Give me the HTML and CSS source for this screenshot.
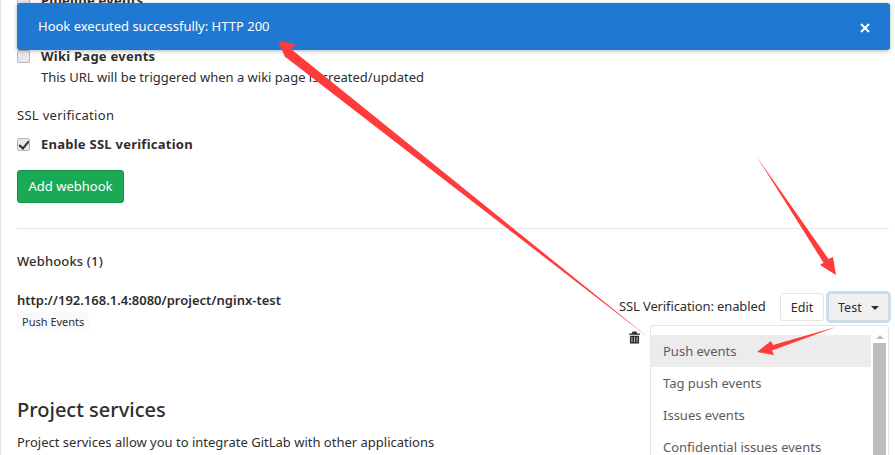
FILE: index.html
```html
<!DOCTYPE html>
<html lang="en">
<head>
<meta charset="utf-8">
<title>Webhooks</title>
<link rel="stylesheet" href="styles.css">
</head>
<body>
<main class="page">
  <div class="event event-covered">
    <label class="check-title"><input type="checkbox" class="check"><span>Pipeline events</span></label>
  </div>
  <div class="event">
    <label class="check-title"><input type="checkbox" class="check"><span>Wiki Page events</span></label>
    <p class="help">This URL will be triggered when a wiki page is created/updated</p>
  </div>
  <div class="ssl-label">SSL verification</div>
  <label class="check-title ssl-check"><input type="checkbox" class="check" checked><span>Enable SSL verification</span></label>
  <button class="add-btn" type="button">Add webhook</button>
  <hr class="rule">
  <h5 class="hooks-title">Webhooks (1)</h5>
  <div class="hook">
    <div class="hook-info">
      <div class="hook-url">http://192.168.1.4:8080/project/nginx-test</div>
      <span class="tag">Push Events</span>
    </div>
    <div class="hook-controls">
      <span class="ssl-state">SSL Verification: enabled</span>
      <button class="btn" type="button">Edit</button>
      <div class="test-group">
        <button class="btn btn-test" type="button">Test <span class="caret"></span></button>
        <div class="menu">
          <ul class="menu-list">
            <li class="menu-item active">Push events</li>
            <li class="menu-item">Tag push events</li>
            <li class="menu-item">Issues events</li>
            <li class="menu-item">Confidential issues events</li>
          </ul>
          <div class="scroll"><span class="scroll-up"></span><span class="scroll-thumb"></span></div>
        </div>
      </div>
      <svg class="trash" viewBox="0 0 12 13" width="11" height="13" aria-hidden="true"><path d="M4 0h4l1 2h3v1.500H0V2h3z M1 4.500h10V13H1z" fill="#2e2e2e"/><path d="M3.200 6v5.500M6 6v5.500M8.800 6v5.500" stroke="#cdbbe0" stroke-width="1"/></svg>
    </div>
  </div>
  <h3 class="services-title">Project services</h3>
  <p class="services-text">Project services allow you to integrate GitLab with other applications</p>
</main>

<div class="flash">
  <span>Hook executed successfully: HTTP 200</span>
  <svg class="close" viewBox="0 0 10 10" width="10" height="10" aria-hidden="true"><path d="M1 1l8 8M9 1l-8 8" stroke="#fff" stroke-width="2"/></svg>
</div>

<svg class="arrows" viewBox="0 0 895 455" width="895" height="455" aria-hidden="true">
  <polygon points="278,41 296,44 291,49 649,338 288,59 285,57" fill="#ff3b3b"/>
  <polygon points="757,157 828.500,259 833,257 836,275 820,265 823.500,262.700" fill="#ff3b3b"/>
  <polygon points="836,327 773,345 771,341 757,352 774,355 772,350.500" fill="#ff3b3b"/>
</svg>
</body>
</html>
```
FILE: styles.css
```css
* { box-sizing: border-box; }
html, body { margin: 0; height: 455px; overflow: hidden; background: #fff; }
body {
  font-family: "Noto Sans", "Open Sans", sans-serif;
  font-size: 13px;
  line-height: 21px;
  color: #2e2e2e;
  position: relative;
}
.page {
  height: 465px;
  margin-top: -10px;
  padding: 0 6px 0 16px;
  border-left: 1px solid #e5e5e5;
}
.event { margin-bottom: 14px; }
.event-covered { padding-bottom: 21px; }
.check-title {
  display: flex;
  align-items: center;
  gap: 11px;
  font-weight: 700;
  letter-spacing: .25px;
}
.check {
  appearance: none;
  width: 13px;
  height: 13px;
  margin: 0;
  background: #e8e8e8;
  border: 1px solid #b8b8b8;
  border-radius: 2px;
  position: relative;
  flex: none;
}
.check:checked::before {
  content: "";
  position: absolute;
  left: 3px;
  top: 0;
  width: 4px;
  height: 8px;
  border: solid #333;
  border-width: 0 2px 2px 0;
  transform: rotate(40deg);
}
.help { margin: 0; padding-left: 24px; }
.ssl-label { margin-top: 17px; letter-spacing: .3px; }
.ssl-check { margin-top: 8px; }
.add-btn {
  display: block;
  margin-top: 15px;
  width: 107px;
  height: 33px;
  padding: 0;
  background: #1aaa55;
  border: 1px solid #168f48;
  border-radius: 3px;
  color: #fff;
  font: inherit;
}
.rule { margin: 25px 0 0; border: 0; border-top: 1px solid #e5e5e5; }
.hooks-title { margin: 22px 0 0; font-size: 13px; line-height: 21px; font-weight: 500; letter-spacing: .15px; }
.hook { display: flex; justify-content: space-between; margin-top: 18px; }
.hook-url { font-weight: 600; }
.tag {
  display: inline-block;
  margin-top: 1px;
  padding: 0 5px;
  height: 20px;
  line-height: 20px;
  font-size: 11px;
  background: #f8fafc;
  border-radius: 3px;
}
.hook-controls {
  width: 270px;
  display: flex;
  flex-wrap: wrap;
  align-items: flex-start;
  align-content: flex-start;
}
.ssl-state { width: 161px; margin-top: 6px; letter-spacing: -.12px; }
.btn {
  height: 28px;
  padding: 0;
  width: 44px;
  margin-top: 3px;
  background: #fff;
  border: 1px solid #e5e5e5;
  border-radius: 3px;
  font: inherit;
  font-size: 12.500px;
  color: #2e2e2e;
}
.test-group { position: relative; margin-left: 4px; }
.btn-test {
  width: 61px;
  background: #f0f0f0;
  border-color: #d8d8d8;
  box-shadow: 0 0 0 2px #bfe0fa;
}
.caret {
  display: inline-block;
  margin-left: 6px;
  vertical-align: 2px;
  border: 4px solid transparent;
  border-top-color: #2e2e2e;
  border-bottom: 0;
}
.menu {
  position: absolute;
  top: 35px;
  right: 0;
  width: 239px;
  height: 140px;
  padding-top: 9px;
  display: flex;
  background: #fff;
  border: 1px solid #e5e5e5;
  border-radius: 3px;
}
.menu-list { margin: 0; padding: 0; list-style: none; flex: 1; }
.menu-item {
  height: 32px;
  line-height: 32px;
  padding-left: 12px;
  color: #5c5c5c;
}
.menu-item.active { background: #ececec; }
.scroll { width: 17px; padding: 0 2px; display: flex; flex-direction: column; align-items: center; }
.scroll-up {
  margin: 0 0 4px;
  border: 4px solid transparent;
  border-bottom-color: #bdbdbd;
  border-top: 0;
}
.scroll-thumb { width: 13px; flex: 1; background: #bdbdbd; }
.trash { margin: 10px 0 0 10px; }
.services-title { margin: 51px 0 0; font-size: 20px; line-height: 30px; font-weight: 500; }
.services-text { margin: 7px 0 0; }
.flash {
  position: absolute;
  left: 17px;
  top: 3px;
  width: 873px;
  height: 47px;
  padding: 0 20px 0 21px;
  display: flex;
  align-items: center;
  justify-content: space-between;
  background: #1f78d1;
  color: #fff;
  border-radius: 3px;
  box-shadow: 0 1px 4px rgba(0,0,0,.3);
}
.close { margin-top: 3px; }
.arrows { position: absolute; left: 0; top: 0; pointer-events: none; }
```
